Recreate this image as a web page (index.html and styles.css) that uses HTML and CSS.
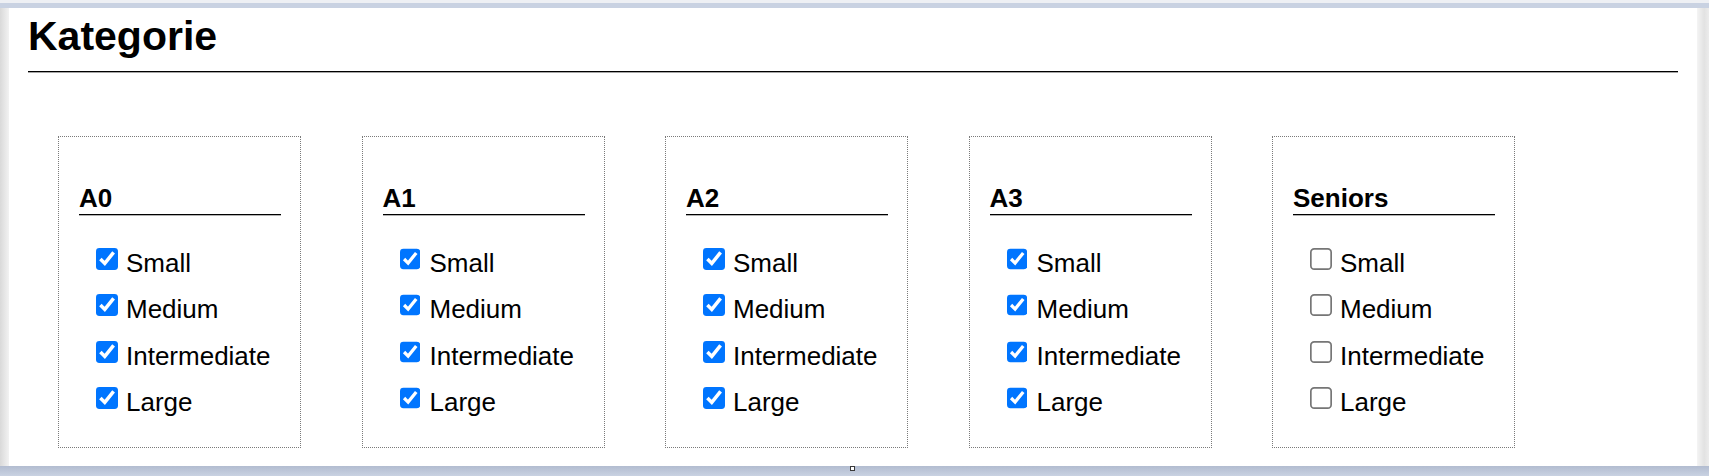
FILE: index.html
```html
<!DOCTYPE html>
<html lang="de">
<head>
<meta charset="utf-8">
<title>Kategorie</title>
<link rel="stylesheet" href="styles.css">
</head>
<body>
<div class="frame">
  <div class="top-strip"></div>
  <div class="stage">
    <div class="shade-left"></div>
    <main class="page">
      <h1 class="title">Kategorie</h1>
      <div class="rule"></div>
      <div class="groups">
        <section class="group">
          <h2 class="group-title">A0</h2>
          <div class="options">
            <label class="option"><input type="checkbox" checked><span class="option-text">Small</span></label>
            <label class="option"><input type="checkbox" checked><span class="option-text">Medium</span></label>
            <label class="option"><input type="checkbox" checked><span class="option-text">Intermediate</span></label>
            <label class="option"><input type="checkbox" checked><span class="option-text">Large</span></label>
          </div>
        </section>
        <section class="group">
          <h2 class="group-title">A1</h2>
          <div class="options">
            <label class="option"><input type="checkbox" checked><span class="option-text">Small</span></label>
            <label class="option"><input type="checkbox" checked><span class="option-text">Medium</span></label>
            <label class="option"><input type="checkbox" checked><span class="option-text">Intermediate</span></label>
            <label class="option"><input type="checkbox" checked><span class="option-text">Large</span></label>
          </div>
        </section>
        <section class="group">
          <h2 class="group-title">A2</h2>
          <div class="options">
            <label class="option"><input type="checkbox" checked><span class="option-text">Small</span></label>
            <label class="option"><input type="checkbox" checked><span class="option-text">Medium</span></label>
            <label class="option"><input type="checkbox" checked><span class="option-text">Intermediate</span></label>
            <label class="option"><input type="checkbox" checked><span class="option-text">Large</span></label>
          </div>
        </section>
        <section class="group">
          <h2 class="group-title">A3</h2>
          <div class="options">
            <label class="option"><input type="checkbox" checked><span class="option-text">Small</span></label>
            <label class="option"><input type="checkbox" checked><span class="option-text">Medium</span></label>
            <label class="option"><input type="checkbox" checked><span class="option-text">Intermediate</span></label>
            <label class="option"><input type="checkbox" checked><span class="option-text">Large</span></label>
          </div>
        </section>
        <section class="group">
          <h2 class="group-title">Seniors</h2>
          <div class="options">
            <label class="option"><input type="checkbox"><span class="option-text">Small</span></label>
            <label class="option"><input type="checkbox"><span class="option-text">Medium</span></label>
            <label class="option"><input type="checkbox"><span class="option-text">Intermediate</span></label>
            <label class="option"><input type="checkbox"><span class="option-text">Large</span></label>
          </div>
        </section>
      </div>
    </main>
    <div class="shade-right"></div>
  </div>
  <div class="bottom-band"><span class="handle"></span></div>
</div>
</body>
</html>
```

FILE: styles.css
```css
html, body {
  margin: 0;
  padding: 0;
}

body {
  width: 1709px;
  height: 476px;
  overflow: hidden;
  background: #c9d2e2;
  font-family: "Liberation Sans", Arial, sans-serif;
  color: #000;
}

.frame {
  display: flex;
  flex-direction: column;
  height: 476px;
}

.top-strip {
  height: 3px;
  border-bottom: 5px solid #c9d2e2;
  background: #eef0f4;
  flex: none;
}

.stage {
  display: flex;
  height: 458px;
  flex: none;
}

.shade-left {
  width: 9px;
  flex: none;
  background: linear-gradient(to right, #d9d9d9, #f2f2f2);
}

.shade-right {
  width: 12px;
  flex: none;
  background: linear-gradient(to right, #f4f4f4, #e2e2e2 60%, #ececec);
}

.page {
  flex: 1;
  background: #fff;
  padding: 5px 19px 0 19px;
  box-sizing: border-box;
  overflow: hidden;
}

.title {
  margin: 0;
  font-size: 41px;
  line-height: 46px;
  font-weight: bold;
}

.rule {
  margin-top: 12px;
  height: 1px;
  background: #000;
  box-shadow: 0 1px 0 rgba(0, 0, 0, 0.35);
}

.groups {
  display: flex;
  gap: 60.5px;
  margin: 64px 0 0 30px;
}

.group {
  flex: none;
  width: 243px;
  height: 312px;
  box-sizing: border-box;
  border: 1px dotted #7a7a7a;
  padding: 48px 19px 0 20px;
}

.group-title {
  margin: 0;
  font-size: 26px;
  line-height: 26px;
  font-weight: bold;
  padding-bottom: 3px;
  border-bottom: 1px solid #000;
  box-shadow: 0 1px 0 rgba(0, 0, 0, 0.3);
}

.options {
  margin-top: 32px;
  padding-left: 17px;
}

.option {
  display: flex;
  align-items: flex-start;
  gap: 8px;
  height: 46.4px;
  padding-top: 1px;
  box-sizing: border-box;
}

.option input {
  flex: none;
  width: 13px;
  height: 13px;
  margin: 0;
  zoom: 1.6923;
  accent-color: #0075ff;
}

.option-text {
  font-size: 26px;
  line-height: 30px;
  margin-top: 0;
}

.bottom-band {
  flex: 1;
  display: flex;
  justify-content: center;
  align-items: flex-start;
  background: linear-gradient(#b2bcd0, #c9d2e2);
}

.handle {
  width: 3px;
  height: 3px;
  margin-right: 4px;
  border: 1px solid #3a3a3a;
  background: #fff;
}
```
